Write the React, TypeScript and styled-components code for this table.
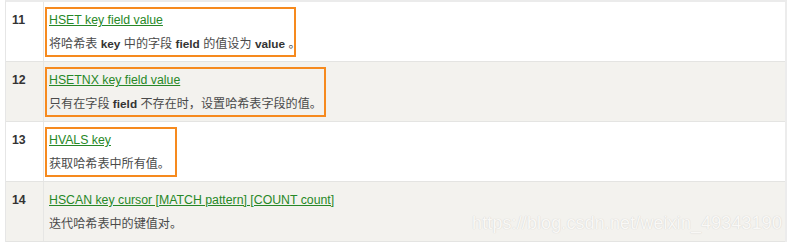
import styled, { createGlobalStyle } from 'styled-components';

const GlobalStyle = createGlobalStyle`
    html, body {
        margin: 0;
        padding: 0;
        background: #ffffff;
    }
    body {
        font-family: "Liberation Sans", "Noto Sans CJK SC", sans-serif;
        font-size: 12.3px;
        color: #444;
    }
`;

const Page = styled.div`
    position: relative;
    width: 796px;
    height: 248px;
    padding: 0 9px 0 5px;
    box-sizing: border-box;
    overflow: hidden;
`;

const Table = styled.div`
    border-top: 2px solid #ebebeb;
    border-left: 1px solid #e6e6e6;
    border-right: 2px solid #ececec;
`;

const Row = styled.div<{ $shaded: boolean }>`
    display: grid;
    grid-template-columns: 38px 1fr;
    height: 60px;
    box-sizing: border-box;
    border-bottom: 1px solid #e4e4e2;
    background: ${({ $shaded }) => ($shaded ? '#f3f2ee' : '#ffffff')};
`;

const NumCell = styled.div`
    border-right: 1px solid #e6e6e4;
    padding: 9px 0 0 6px;
    font-weight: bold;
    color: #333;
    line-height: 18px;
`;

const Cell = styled.div`
    padding: 5px 0 0 1px;
`;

const Mark = styled.div<{ $width?: number }>`
    display: inline-block;
    box-sizing: border-box;
    width: ${({ $width }) => ($width ? `${$width}px` : 'auto')};
    height: 50px;
    padding: 2px 0 0 2px;
    border: 2px solid ${({ $width }) => ($width ? '#f68a1e' : 'transparent')};
    white-space: nowrap;
`;

const Link = styled.a`
    display: block;
    color: #278827;
    text-decoration: underline;
    line-height: 18px;
`;

const Desc = styled.p`
    margin: 6px 0 0;
    font-size: 12.1px;
    line-height: 18px;
    color: #4a4a4a;
    & b {
        color: #333;
        font-size: 11.8px;
    }
`;

const Watermark = styled.div`
    position: absolute;
    right: 14px;
    top: 213px;
    font-family: "Liberation Sans", sans-serif;
    font-size: 18px;
    color: #f9f8f6;
    text-shadow: 0 0 1px #d6d4d0, 0 0 1px #e0deda;
    letter-spacing: 0.1px;
`;

type Command = {
    num: number;
    cmd: string;
    desc: React.ReactNode;
    mark?: number;
};

const commands: Command[] = [
    {
        num: 11,
        cmd: 'HSET key field value',
        desc: <>将哈希表 <b>key</b> 中的字段 <b>field</b> 的值设为 <b>value</b> 。</>,
        mark: 251,
    },
    {
        num: 12,
        cmd: 'HSETNX key field value',
        desc: <>只有在字段 <b>field</b> 不存在时，设置哈希表字段的值。</>,
        mark: 281,
    },
    {
        num: 13,
        cmd: 'HVALS key',
        desc: <>获取哈希表中所有值。</>,
        mark: 132,
    },
    {
        num: 14,
        cmd: 'HSCAN key cursor [MATCH pattern] [COUNT count]',
        desc: <>迭代哈希表中的键值对。</>,
    },
];

const App = () => {
    return (
        <Page>
            <GlobalStyle />
            <Table>
                {commands.map((c, i) => (
                    <Row key={c.num} $shaded={i % 2 === 1}>
                        <NumCell>{c.num}</NumCell>
                        <Cell>
                            <Mark $width={c.mark}>
                                <Link href="#">{c.cmd}</Link>
                                <Desc>{c.desc}</Desc>
                            </Mark>
                        </Cell>
                    </Row>
                ))}
            </Table>
            <Watermark>https://blog.csdn.net/weixin_49343190</Watermark>
        </Page>
    );
};

export default App;
